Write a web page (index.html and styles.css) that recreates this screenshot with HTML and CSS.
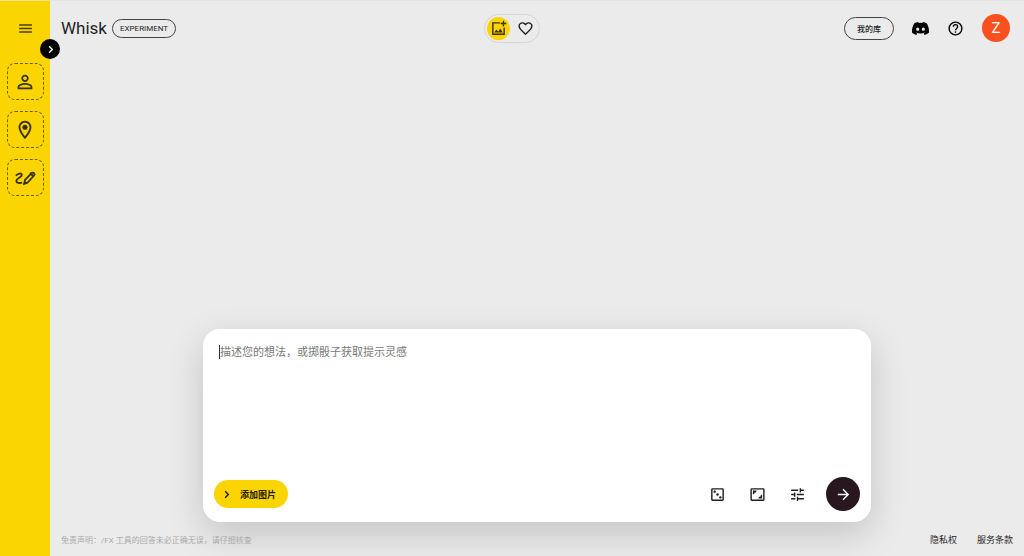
FILE: index.html
```html
<!DOCTYPE html>
<html lang="zh-CN">
<head>
    <meta charset="UTF-8">
    <meta name="viewport" content="width=device-width, initial-scale=1.0">
    <title>Whisk</title>
    <link rel="stylesheet" href="styles.css">
</head>
<body>
    <div class="page">
        <!-- Yellow sidebar -->
        <aside class="sidebar">
            <button class="slot" aria-label="主体">
                <svg class="icon-large" viewBox="0 0 24 24"><path d="M12 5.9c1.16 0 2.1.94 2.1 2.1s-.94 2.1-2.1 2.1S9.9 9.16 9.9 8s.94-2.1 2.1-2.1m0 9c2.97 0 6.1 1.46 6.1 2.1v1.1H5.9V17c0-.64 3.13-2.1 6.1-2.1M12 4C9.79 4 8 5.79 8 8s1.79 4 4 4 4-1.79 4-4-1.79-4-4-4zm0 9c-2.67 0-8 1.34-8 4v3h16v-3c0-2.66-5.33-4-8-4z"/></svg>
            </button>
            <button class="slot" aria-label="场景">
                <svg class="icon-large" viewBox="0 0 24 24"><path d="M12 2C8.13 2 5 5.13 5 9c0 5.25 7 13 7 13s7-7.75 7-13c0-3.87-3.13-7-7-7zM7 9c0-2.76 2.24-5 5-5s5 2.24 5 5c0 2.88-2.88 7.19-5 9.88C9.92 16.21 7 11.85 7 9z"/><circle cx="12" cy="9" r="2.8"/></svg>
            </button>
            <button class="slot" aria-label="风格">
                <svg class="icon-large line" viewBox="0 0 24 24"><path d="M2 9.500C4.500 7 8.500 6 8.500 8.800 8.500 11.500 2.500 12 2.500 15.200 2.500 17.800 6 17.800 9 17"/><path d="M11.200 18.300l.8-4.300 7.500-7.500c1.500-1.200 3.700 1 2.500 2.500L15.200 16.700z"/><path class="fill" d="M10.500 19l.8-4 3.700 3.200zM17 7.500l4 4 1-2-4-4z"/></svg>
            </button>
            <button class="expand" aria-label="展开">
                <svg class="icon-small line" viewBox="0 0 24 24"><path d="M9 5l7 7-7 7"/></svg>
            </button>
        </aside>

        <header class="header">
            <div class="header-left">
                <button class="menu" aria-label="菜单">
                    <svg class="icon" viewBox="0 0 24 24"><path d="M3 18h18v-2H3v2zm0-5h18v-2H3v2zm0-7v2h18V6H3z"/></svg>
                </button>
                <h1 class="title">Whisk</h1>
                <span class="tag">EXPERIMENT</span>
            </div>
            <nav class="switch">
                <button class="switch-btn active" aria-label="创作">
                    <svg class="icon line" viewBox="0 0 24 24"><path d="M14 4H4v16h16V11"/><path d="M19 1v8M15 5h8"/><path class="fill" d="M6 17.500l3-4 2.500 3 3-4.500 3.500 5.500z"/></svg>
                </button>
                <button class="switch-btn" aria-label="收藏">
                    <svg class="icon" viewBox="0 0 24 24"><path d="M16.500 3c-1.740 0-3.410.81-4.500 2.090C10.910 3.810 9.240 3 7.500 3 4.420 3 2 5.420 2 8.500c0 3.780 3.400 6.860 8.550 11.540L12 21.350l1.450-1.320C18.600 15.360 22 12.280 22 8.500 22 5.420 19.580 3 16.500 3zm-4.400 15.550l-.1.1-.1-.1C7.140 14.240 4 11.390 4 8.500 4 6.500 5.500 5 7.500 5c1.540 0 3.040.99 3.570 2.360h1.870C13.460 5.990 14.960 5 16.500 5c2 0 3.500 1.500 3.500 3.500 0 2.890-3.140 5.740-7.900 10.050z"/></svg>
                </button>
            </nav>
            <div class="header-right">
                <button class="library">我的库</button>
                <a href="#" class="icon-link" aria-label="Discord">
                    <svg class="icon" viewBox="0 0 24 24"><path d="M20.317 4.370a19.790 19.790 0 0 0-4.885-1.515.074.074 0 0 0-.079.037c-.21.375-.444.864-.608 1.250a18.270 18.270 0 0 0-5.487 0 12.640 12.640 0 0 0-.617-1.250.077.077 0 0 0-.079-.037A19.736 19.736 0 0 0 3.677 4.370a.07.07 0 0 0-.032.027C.533 9.046-.32 13.580.099 18.057a.082.082 0 0 0 .031.057 19.900 19.900 0 0 0 5.993 3.030.078.078 0 0 0 .084-.028c.462-.63.874-1.295 1.226-1.994a.076.076 0 0 0-.041-.106 13.107 13.107 0 0 1-1.872-.892.077.077 0 0 1-.008-.128c.126-.094.252-.192.372-.292a.074.074 0 0 1 .077-.01c3.928 1.793 8.180 1.793 12.062 0a.074.074 0 0 1 .078.01c.12.098.246.198.373.292a.077.077 0 0 1-.006.127 12.299 12.299 0 0 1-1.873.892.077.077 0 0 0-.041.107c.36.698.772 1.362 1.225 1.993a.076.076 0 0 0 .084.028 19.839 19.839 0 0 0 6.002-3.030.077.077 0 0 0 .032-.054c.5-5.177-.838-9.674-3.549-13.660a.061.061 0 0 0-.031-.03zM8.020 15.330c-1.183 0-2.157-1.085-2.157-2.419 0-1.333.956-2.419 2.157-2.419 1.210 0 2.176 1.096 2.157 2.420 0 1.333-.956 2.418-2.157 2.418zm7.975 0c-1.183 0-2.157-1.085-2.157-2.419 0-1.333.955-2.419 2.157-2.419 1.210 0 2.176 1.096 2.157 2.420 0 1.333-.946 2.418-2.157 2.418z"/></svg>
                </a>
                <button class="icon-link" aria-label="帮助">
                    <svg class="icon line" viewBox="0 0 24 24"><circle cx="12" cy="12" r="9"/><path d="M9 9.500C9 5.500 15 5.500 15 9.500c0 2.300-3 2.500-3 5"/><path d="M12 16v2"/></svg>
                </button>
                <button class="avatar">Z</button>
            </div>
        </header>

        <main class="main">
            <form class="card">
                <div class="prompt-box">
                    <textarea class="prompt" aria-label="提示" placeholder="描述您的想法，或掷骰子获取提示灵感"></textarea>
                </div>
                <div class="toolbar">
                    <button type="button" class="add">
                        <svg class="icon-small line" viewBox="0 0 24 24"><path d="M9 5l7 7-7 7"/></svg>
                        添加图片
                    </button>
                    <div class="tools">
                        <button type="button" class="tool" aria-label="掷骰子">
                            <svg class="icon line" viewBox="0 0 24 24"><rect x="4" y="4" width="16" height="16" rx="1"/><g class="fill"><circle cx="8" cy="8" r="1.700"/><circle cx="12" cy="12" r="1.700"/><circle cx="16" cy="16" r="1.700"/></g></svg>
                        </button>
                        <button type="button" class="tool" aria-label="宽高比">
                            <svg class="icon line" viewBox="0 0 24 24"><rect x="3" y="4" width="18" height="16" rx="1"/><path class="fill" d="M5.500 12V6.500H11L9.500 9H8L7.500 11zM18.500 12v5.500H13l1.500-2.500H16l.5-2z"/></svg>
                        </button>
                        <button type="button" class="tool" aria-label="设置">
                            <svg class="icon" viewBox="0 0 24 24"><path d="M3 17v2h6v-2H3zM3 5v2h10V5H3zm10 16v-2h8v-2h-8v-2h-2v6h2zM7 9v2H3v2h4v2h2V9H7zm14 4v-2H11v2h10zm-6-4h2V7h4V5h-4V3h-2v6z"/></svg>
                        </button>
                        <button class="send" aria-label="提交">
                            <svg class="icon" viewBox="0 0 24 24"><path d="M12 4l-1.410 1.410L16.170 11H4v2h12.170l-5.580 5.590L12 20l8-8z"/></svg>
                        </button>
                    </div>
                </div>
            </form>
        </main>

        <footer class="footer">
            <p class="note">免责声明：/FX 工具的回答未必正确无误，请仔细核查</p>
            <div class="links">
                <a href="#">隐私权</a>
                <a href="#">服务条款</a>
            </div>
        </footer>
    </div>
</body>
</html>
```
FILE: styles.css
```css
* {
    box-sizing: border-box;
}

body {
    margin: 0;
    background: #ebebeb;
    color: #1f1f1f;
    font-family: Roboto, "Noto Sans CJK SC", sans-serif;
}

button {
    display: flex;
    align-items: center;
    justify-content: center;
    padding: 0;
    border: none;
    background: none;
    color: inherit;
    font-family: inherit;
    cursor: pointer;
}

a {
    color: inherit;
    text-decoration: none;
}

/* Icons */
svg {
    display: block;
    flex: none;
    fill: currentColor;
}

.icon {
    width: 17px;
    height: 17px;
}

.icon-large {
    width: 22px;
    height: 22px;
}

.icon-small {
    width: 11px;
    height: 11px;
}

.line {
    fill: none;
    stroke: currentColor;
    stroke-width: 2;
}

.line .fill {
    fill: currentColor;
    stroke: none;
}

.icon-small.line {
    stroke-width: 3;
}

/* The sidebar runs under the header, which spans both columns */
.page {
    display: grid;
    grid-template-columns: 50px 1fr;
    grid-template-rows: 56px 1fr 34px;
    min-height: 100vh;
    box-shadow: inset 0 1px #e2e2e2;
}

/* Sidebar */
.sidebar {
    grid-column: 1;
    grid-row: 1 / 4;
    position: relative;
    display: flex;
    flex-direction: column;
    align-items: center;
    gap: 11px;
    padding-top: 62px;
    background: #fad502;
    border-top: 1px solid #f3e08a;
}

.slot {
    width: 37px;
    height: 37px;
    border: 1px dashed #6b5d0c;
    border-radius: 8px;
    color: #3a3205;
}

.expand {
    position: absolute;
    top: 38px;
    right: -10px;
    z-index: 2;
    width: 20px;
    height: 20px;
    border-radius: 50%;
    background: #000;
    color: #fff;
}

/* Header */
.header {
    grid-column: 1 / 3;
    grid-row: 1;
    z-index: 1;
    display: grid;
    grid-template-columns: 1fr auto 1fr;
    align-items: center;
}

.header-left,
.header-right {
    display: flex;
    align-items: center;
}

.menu {
    width: 50px;
    height: 40px;
    color: #4a4008;
}

.title {
    margin: 0 5px 0 11px;
    font-size: 17px;
    font-weight: 400;
    line-height: 20px;
}

.tag {
    padding: 0 7px;
    border: 1px solid #444;
    border-radius: 10px;
    font-size: 8px;
    line-height: 17px;
}

.switch {
    display: flex;
    gap: 4px;
    padding: 2px;
    border: 1px solid #d6d6d6;
    border-radius: 15px;
}

.switch-btn {
    width: 23px;
    height: 23px;
    border-radius: 50%;
}

.switch-btn.active {
    background: #fad502;
    color: #3a3205;
}

.header-right {
    justify-content: flex-end;
    gap: 18px;
    padding-right: 14px;
}

.library {
    height: 23px;
    padding: 0 12px;
    border: 1px solid #444;
    border-radius: 12px;
    font-size: 8px;
    font-weight: 500;
}

.icon-link {
    color: #000;
}

.avatar {
    width: 28px;
    height: 28px;
    border-radius: 50%;
    background: #f9511d;
    color: #fff;
    font-size: 15px;
}

/* Prompt card */
.main {
    grid-column: 2;
    display: flex;
    align-items: flex-end;
    justify-content: center;
    padding: 0 16px;
}

.card {
    display: flex;
    flex-direction: column;
    width: 100%;
    max-width: 668px;
    padding: 14px 11px 11px;
    border-radius: 17px;
    background: #fff;
    box-shadow: 0 12px 36px rgba(0, 0, 0, 0.17);
}

.prompt-box {
    position: relative;
    display: flex;
    padding: 0 6px;
}

/* Text caret */
.prompt-box::before {
    content: "";
    position: absolute;
    top: 2px;
    left: 5px;
    width: 1px;
    height: 14px;
    background: #333;
}

.prompt {
    width: 100%;
    height: 134px;
    padding: 0;
    border: none;
    outline: none;
    resize: none;
    background: none;
    font-family: inherit;
    font-size: 11px;
    line-height: 20px;
}

.prompt::placeholder {
    color: #777;
}

.toolbar {
    display: flex;
    align-items: center;
    justify-content: space-between;
}

.add {
    gap: 8px;
    height: 28px;
    padding: 0 12px 0 7px;
    border-radius: 14px;
    background: #fad502;
    color: #1f1a00;
    font-size: 9px;
    font-weight: 700;
}

.tools {
    display: flex;
    align-items: center;
    gap: 23px;
}

.send {
    width: 34px;
    height: 34px;
    margin-left: -3px;
    border-radius: 50%;
    background: #28171f;
    color: #fff;
}

/* Footer */
.footer {
    grid-column: 2;
    display: flex;
    align-items: center;
    justify-content: space-between;
    padding: 0 11px;
}

.note {
    margin: 0;
    color: #aaa;
    font-size: 8px;
}

.links {
    display: flex;
    gap: 20px;
    font-size: 9px;
}
```
